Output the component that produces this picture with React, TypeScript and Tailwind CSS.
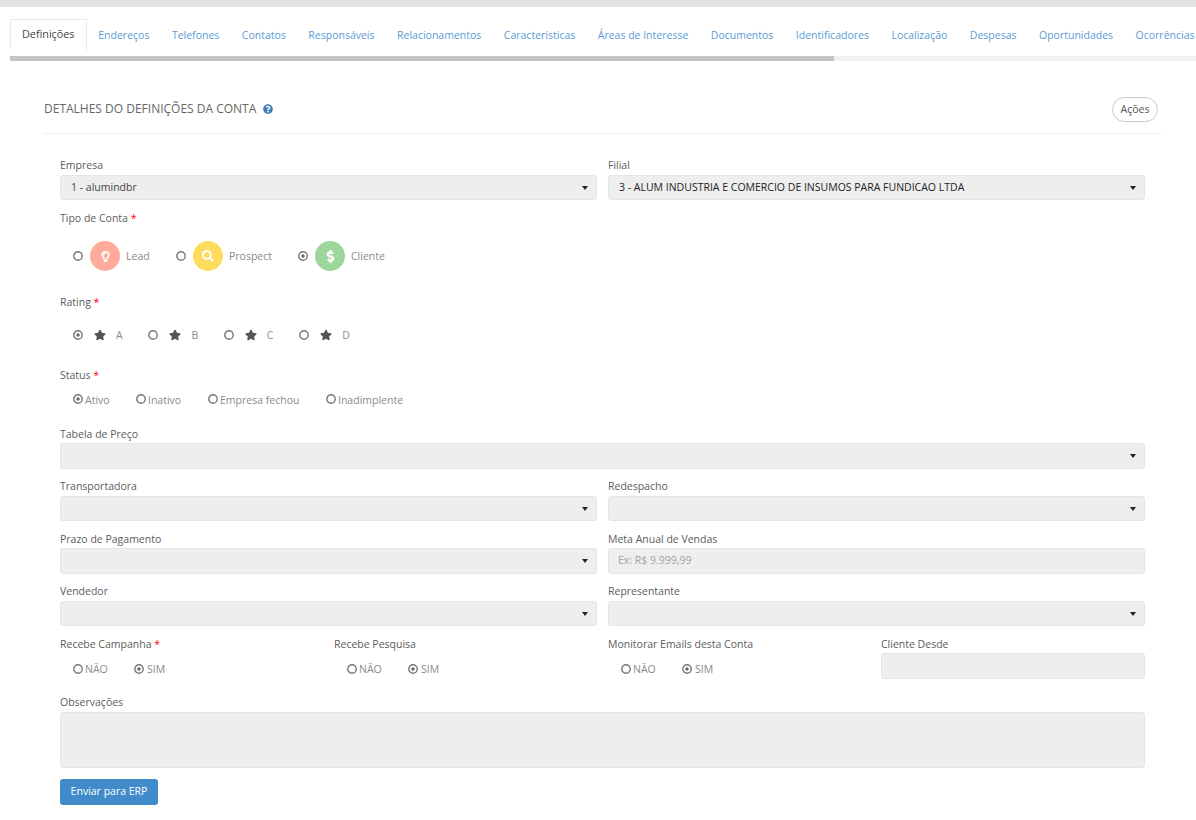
import { ReactNode } from "react";
import { FaDollarSign, FaQuestionCircle, FaRegLightbulb, FaSearch, FaStar } from "react-icons/fa";

const tabs = [
  "Definições",
  "Endereços",
  "Telefones",
  "Contatos",
  "Responsáveis",
  "Relacionamentos",
  "Características",
  "Áreas de Interesse",
  "Documentos",
  "Identificadores",
  "Localização",
  "Despesas",
  "Oportunidades",
  "Ocorrências",
];

function Radio({ checked = false }: { checked?: boolean }) {
  return (
    <svg viewBox="0 0 10 10" className="h-[10px] w-[10px] shrink-0">
      <circle cx="5" cy="5" r="4.2" fill="white" stroke="#777777" strokeWidth="1.4" />
      {checked && <circle cx="5" cy="5" r="1.7" fill="#666666" />}
    </svg>
  );
}

// the option texts sit 1px under the middle of their row
function Txt({ children, className = "" }: { children: ReactNode; className?: string }) {
  return <span className={`mt-[2px] ${className}`}>{children}</span>;
}

function Label({ text, required = false }: { text: string; required?: boolean }) {
  return (
    <div className="h-[16px] text-[10.5px] leading-[16px] text-[#5c5c5c]">
      {text}
      {required && <span className="text-[#ff0000]"> *</span>}
    </div>
  );
}

function Select({ value, height = "h-[25px]", dark = false }: { value?: string; height?: string; dark?: boolean }) {
  return (
    <div className={`flex ${height} items-center justify-between rounded-[3px] border border-[#e5e5e5] bg-[#eeeeee] pl-[10px] pr-[8px] text-[10.5px] ${dark ? "text-[#222222]" : "text-[#444444]"}`}>
      <span>{value}</span>
      <span className="h-0 w-0 border-x-[3px] border-t-[4px] border-x-transparent border-t-[#222222]" />
    </div>
  );
}

function YesNo() {
  return (
    <div className="mt-[9px] flex h-[16px] items-center pl-[13px] text-[10.5px] text-[#8a8a8a]">
      <Radio />
      <Txt className="ml-[2px] w-[24px]">NÃO</Txt>
      <span className="ml-[25px] flex items-center">
        <Radio checked />
        <Txt className="ml-[3px]">SIM</Txt>
      </span>
    </div>
  );
}

export default function App() {
  return (
    <div className="min-h-[820px] bg-white font-['Open_Sans',sans-serif]">
      <div className="h-[7px] bg-[#e3e3e3]" />

      {/* Tabs */}
      <div className="ml-[10px] mt-[12px] overflow-hidden">
        <div className="flex h-[30px] w-[1300px] items-start">
          {tabs.map((tab, i) => (
            <div
              key={tab}
              className={
                i === 0
                  ? "h-[31px] w-[77px] rounded-t-[2px] border border-b-0 border-[#e8e8e8] pl-[11px] pt-[6px] text-[10.8px] leading-[16px] text-[#444444]"
                  : "h-[31px] border border-transparent px-[10.25px] pt-[7px] text-[10.5px] leading-[16px] text-[#5b9bd5]"
              }
            >
              {tab}
            </div>
          ))}
        </div>
        <div className="mt-[7px] h-[5px] bg-[#f1f1f1]">
          <div className="h-full w-[824px] bg-[#c4c4c4]" />
        </div>
      </div>

      <div className="ml-[43px] mt-[35px] w-[1118px]">
        {/* Header */}
        <div className="flex h-[38px] items-start justify-between border-b border-[#eeeeee]">
          <div className="mt-px flex h-[24px] items-center pl-px text-[12px] uppercase text-[#666666]">
            Detalhes do Definições da Conta
            <FaQuestionCircle className="ml-[7px] text-[10px] text-[#3d7fb8]" />
          </div>
          <button className="mr-[3px] mt-[1px] h-[25px] w-[46px] rounded-full border border-[#c8c8c8] bg-white text-[10.5px] text-[#555555]">
            Ações
          </button>
        </div>

        <div className="ml-[17px] w-[1085px]">
          <div className="mt-[23px] grid grid-cols-2 gap-x-[11px]">
            <div>
              <Label text="Empresa" />
              <div className="mt-[2px]">
                <Select value="1 - alumindbr" />
              </div>
            </div>
            <div>
              <Label text="Filial" />
              <div className="mt-[2px]">
                <Select value="3 - ALUM INDUSTRIA E COMERCIO DE INSUMOS PARA FUNDICAO LTDA" dark />
              </div>
            </div>
          </div>

          <div className="mt-[10px]">
            <Label text="Tipo de Conta" required />
          </div>
          <div className="mt-[15px] flex h-[30px] items-center pl-[13px] text-[10.5px] text-[#8a8a8a]">
            <Radio />
            <span className="ml-[7px] flex h-[30px] w-[30px] items-center justify-center rounded-full bg-[#ffab9b] text-[11px] text-white">
              <FaRegLightbulb stroke="currentColor" strokeWidth={30} />
            </span>
            <Txt className="ml-[6px] w-[32px]">Lead</Txt>
            <span className="ml-[18px]">
              <Radio />
            </span>
            <span className="ml-[7px] flex h-[30px] w-[30px] items-center justify-center rounded-full bg-[#ffdc5c] text-[12px] text-white">
              <FaSearch />
            </span>
            <Txt className="ml-[6px] w-[52px]">Prospect</Txt>
            <span className="ml-[17px]">
              <Radio checked />
            </span>
            <span className="ml-[7px] flex h-[30px] w-[30px] items-center justify-center rounded-full bg-[#9dd69b] text-[13px] text-white">
              <FaDollarSign stroke="currentColor" strokeWidth={20} />
            </span>
            <Txt className="ml-[6px]">Cliente</Txt>
          </div>

          <div className="mt-[23px]">
            <Label text="Rating" required />
          </div>
          <div className="mt-[17px] flex h-[16px] items-center pl-[13px] text-[10.5px] text-[#8a8a8a]">
            {["A", "B", "C", "D"].map((letter, i) => (
              <div key={letter} className="flex w-[75.4px] items-center">
                <Radio checked={i === 0} />
                <FaStar className="ml-[11px] text-[12px] text-[#555555]" />
                <Txt className="ml-[10px]">{letter}</Txt>
              </div>
            ))}
          </div>

          <div className="mt-[24px]">
            <Label text="Status" required />
          </div>
          <div className="mt-[8px] flex h-[16px] items-center pl-[13px] text-[10.5px] text-[#8a8a8a]">
            <Radio checked />
            <Txt className="ml-[2px] mt-[3px] w-[51px]">Ativo</Txt>
            <Radio />
            <Txt className="ml-[2px] mt-[3px] w-[60px]">Inativo</Txt>
            <Radio />
            <Txt className="ml-[2px] mt-[3px] w-[106px]">Empresa fechou</Txt>
            <Radio />
            <Txt className="ml-[2px] mt-[3px]">Inadimplente</Txt>
          </div>

          <div className="mt-[19px]">
            <Label text="Tabela de Preço" />
          </div>
          <div className="mt-px">
            <Select height="h-[26px]" />
          </div>

          <div className="mt-[9px] grid grid-cols-2 gap-x-[11px]">
            <div>
              <Label text="Transportadora" />
              <div className="mt-[2px]">
                <Select />
              </div>
            </div>
            <div>
              <Label text="Redespacho" />
              <div className="mt-[2px]">
                <Select />
              </div>
            </div>
          </div>

          <div className="mt-[10px] grid grid-cols-2 gap-x-[11px]">
            <div>
              <Label text="Prazo de Pagamento" />
              <div className="mt-px">
                <Select height="h-[26px]" />
              </div>
            </div>
            <div>
              <Label text="Meta Anual de Vendas" />
              <div className="mt-px flex h-[26px] items-center rounded-[3px] border border-[#e5e5e5] bg-[#eeeeee] pl-[9px] text-[10.5px] text-[#a3a3a3]">
                Ex: R$ 9.999,99
              </div>
            </div>
          </div>

          <div className="mt-[9px] grid grid-cols-2 gap-x-[11px]">
            <div>
              <Label text="Vendedor" />
              <div className="mt-[2px]">
                <Select />
              </div>
            </div>
            <div>
              <Label text="Representante" />
              <div className="mt-[2px]">
                <Select />
              </div>
            </div>
          </div>

          <div className="mt-[10px] grid h-[43px] grid-cols-[263px_263px_262px_264px] gap-x-[11px]">
            <div>
              <Label text="Recebe Campanha" required />
              <YesNo />
            </div>
            <div>
              <Label text="Recebe Pesquisa" />
              <YesNo />
            </div>
            <div>
              <Label text="Monitorar Emails desta Conta" />
              <YesNo />
            </div>
            <div>
              <Label text="Cliente Desde" />
              <div className="mt-px h-[26px] rounded-[3px] border border-[#e5e5e5] bg-[#eeeeee]" />
            </div>
          </div>

          <div className="mt-[15px]">
            <Label text="Observações" />
          </div>
          <div className="mt-[2px] h-[56px] rounded-[3px] border border-[#e5e5e5] bg-[#eeeeee]" />

          <button className="mt-[11px] block h-[26px] w-[98px] rounded-[3px] bg-[#428bca] text-[10.5px] font-medium text-white">
            Enviar para ERP
          </button>
        </div>
      </div>
    </div>
  );
}
